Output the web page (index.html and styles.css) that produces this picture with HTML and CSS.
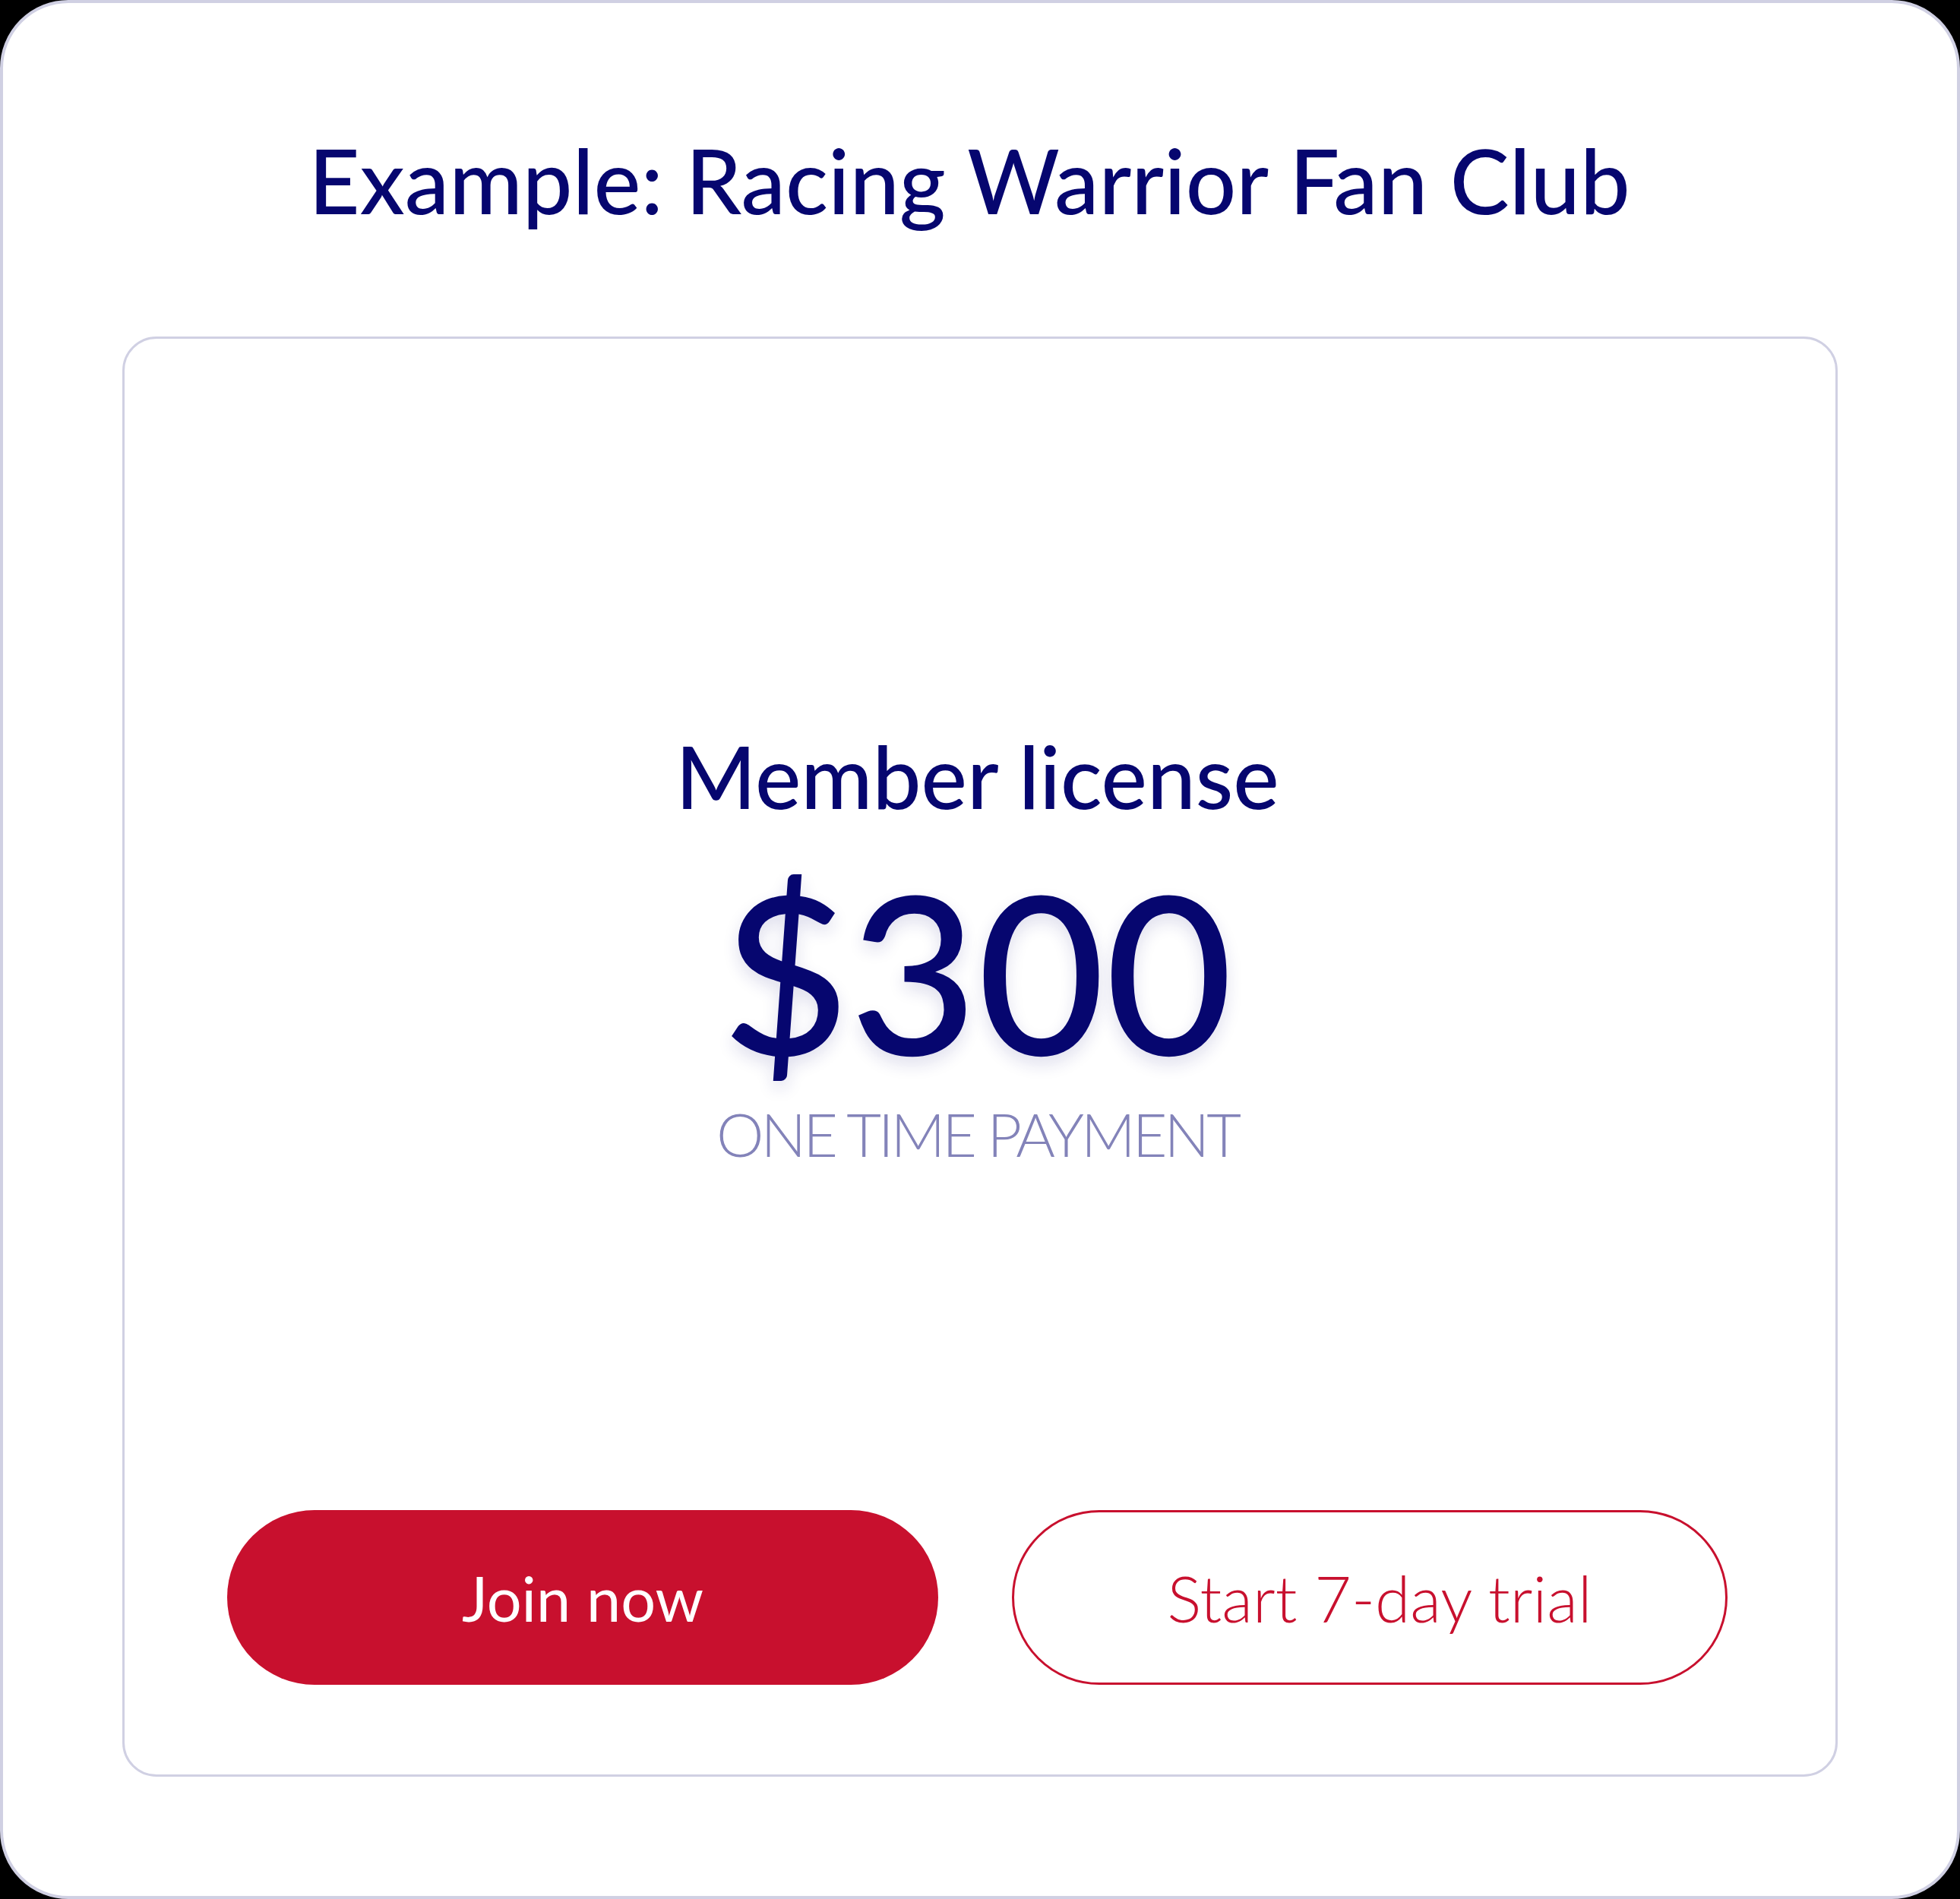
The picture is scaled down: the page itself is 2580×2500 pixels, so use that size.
FILE: index.html
```html
<!DOCTYPE html>
<html lang="en">
<head>
<meta charset="utf-8">
<title>Racing Warrior Fan Club</title>
<link rel="stylesheet" href="styles.css">
</head>
<body>
<div class="frame">
  <h1 class="title">Example: Racing Warrior Fan Club</h1>
  <section class="plan">
    <div class="plan-info">
      <h2 class="plan-name">Member license</h2>
      <div class="plan-price">$300</div>
      <div class="plan-note">ONE TIME PAYMENT</div>
    </div>
    <div class="actions">
      <button class="btn btn-primary">Join now</button>
      <button class="btn btn-outline">Start 7-day trial</button>
    </div>
  </section>
</div>
</body>
</html>
```
FILE: styles.css
```css
html, body {
  margin: 0;
  padding: 0;
  background: #000;
}
body {
  width: 2580px;
  height: 2500px;
  font-family: "Lato", "Noto Sans", sans-serif;
}
.frame {
  box-sizing: border-box;
  width: 2580px;
  height: 2500px;
  background: #fff;
  border: 4px solid #d0d0e3;
  border-radius: 90px;
  padding: 163px 157px 157px 157px;
  display: flex;
  flex-direction: column;
}
.title {
  margin: 0;
  padding-right: 28px;
  text-align: center;
  font-size: 117px;
  line-height: 1.2;
  font-weight: 500;
  color: #06066f;
}
.plan {
  flex: 1;
  margin-top: 136px;
  border: 3px solid #d0d0e3;
  border-radius: 45px;
  display: flex;
  flex-direction: column;
  padding: 507px 142px 118px 135px;
}
.plan-info {
  flex: 1;
  display: flex;
  flex-direction: column;
  align-items: center;
}
.plan-name {
  margin: 0;
  font-size: 114px;
  line-height: 1.2;
  font-weight: 500;
  color: #06066f;
}
.plan-price {
  margin-top: 13px;
  font-size: 290px;
  line-height: 1.2;
  font-weight: 500;
  color: #06066f;
  text-shadow: 0 10px 22px rgba(30, 30, 130, 0.14);
}
.plan-note {
  margin-top: 2px;
  font-size: 79px;
  line-height: 1;
  font-weight: 300;
  letter-spacing: -4px;
  word-spacing: 0;
  color: #8383b9;
}
.actions {
  display: flex;
  gap: 97px;
}
.btn {
  flex: 1 1 0;
  box-sizing: border-box;
  height: 230px;
  border-radius: 115px;
  font-family: "Lato", "Noto Sans", sans-serif;
  cursor: pointer;
}
.btn-primary {
  background: #c8102e;
  color: #fff;
  border: none;
  font-size: 81px;
  font-weight: 400;
}
.btn-outline {
  background: #fff;
  color: #c8102e;
  border: 3px solid #c8102e;
  font-size: 84px;
  font-weight: 300;
  text-indent: 26px;
}
```
